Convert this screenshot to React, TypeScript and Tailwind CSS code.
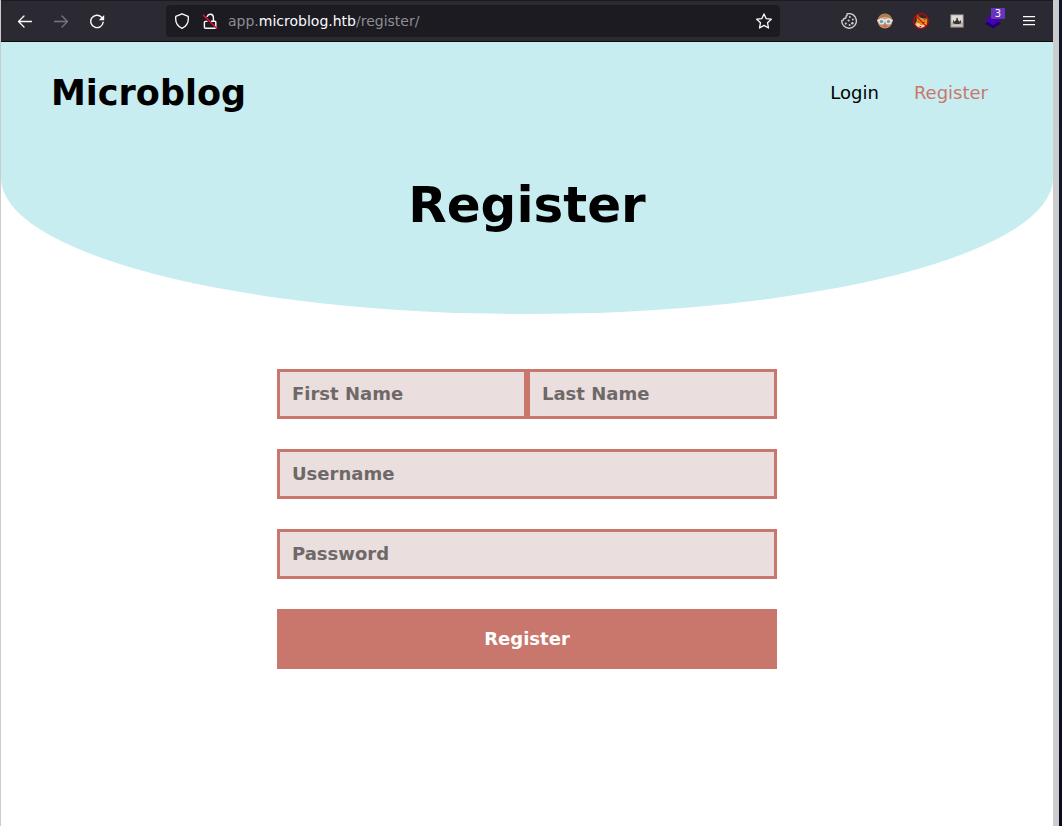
import React from "react";

function Slot({ children }: { children?: React.ReactNode }) {
  return <div className="flex h-8 w-9 items-center justify-center">{children}</div>;
}

function BackIcon({ className }: { className: string }) {
  return (
    <svg className={className} width="16" height="16" viewBox="0 0 16 16" fill="none" stroke="currentColor" strokeWidth="1.3" strokeLinecap="round" strokeLinejoin="round">
      <path d="M14.5 8.5H1.6M7 3 1.5 8.5 7 14" />
    </svg>
  );
}

function ReloadIcon() {
  return (
    <svg width="16" height="16" viewBox="0 0 16 16" fill="none">
      <path d="M12.5 4.2A6.2 6.2 0 1 0 14.1 9.3" stroke="#fbfbfe" strokeWidth="1.4" strokeLinecap="round" />
      <path d="M15.2 2v5.2H9.8z" fill="#fbfbfe" />
    </svg>
  );
}

function ShieldIcon() {
  return (
    <svg width="16" height="16" viewBox="0 0 16 16" fill="none" stroke="#fbfbfe" strokeWidth="1.35" strokeLinejoin="round">
      <path d="M8 .8 14.2 3.3C14.9 8.6 12.4 13.3 8 15.4 3.6 13.3 1.1 8.6 1.8 3.3z" />
    </svg>
  );
}

function InsecureIcon() {
  return (
    <svg width="16" height="16" viewBox="0 0 16 16" fill="none" strokeLinecap="round">
      <path d="M5.2 3.4A3.2 3.2 0 0 1 11.4 4.2V7.8M4.9 8.4H3.3q-.9 0-.9.9v5q0 .9.9.9h9.6q.9 0 .9-.9V9.3q0-1.1-1-1.1H9.5" stroke="#fbfbfe" strokeWidth="1.4" />
      <path d="M1.4 2.2 14.8 15.2" stroke="#f00d3f" strokeWidth="1.4" />
    </svg>
  );
}

function StarIcon() {
  return (
    <svg width="16" height="16" viewBox="0 0 16 16" fill="none" stroke="#fbfbfe" strokeWidth="1.3" strokeLinejoin="round">
      <path d="m8 .9 2.1 4.7 5.2.6-3.8 3.5 1 5.3L8 12.4 3.5 15l1-5.3L.7 6.2l5.2-.6z" />
    </svg>
  );
}

function CookieIcon() {
  return (
    <svg width="16" height="16" viewBox="0 0 16 16" fill="none">
      <path d="M6 .9A7.3 7.3 0 1 1 .8 7.5C2 7.6 2.9 6.8 2.8 5.5 4.5 5.7 5.5 4.6 5 3.1 6 3 6.3 2 6 .9z" stroke="#cfced4" strokeWidth="1.4" strokeLinejoin="round" />
      <g fill="#cfced4">
        <circle cx="8.8" cy="4.1" r="1" />
        <circle cx="11.8" cy="6.4" r="1" />
        <circle cx="7.6" cy="7.5" r="1.1" />
        <circle cx="4.8" cy="10.6" r="1.1" />
        <circle cx="8.6" cy="12" r="1" />
        <circle cx="11.4" cy="10.2" r="1.2" />
      </g>
    </svg>
  );
}

function FaceIcon() {
  return (
    <svg width="16" height="16" viewBox="0 0 16 16">
      <circle cx="8" cy="8" r="7.5" fill="#cb8c61" />
      <path d="M.8 7A7.3 7.3 0 0 1 15.2 7L13 5 8 3.8 3 5z" fill="#a77d52" />
      <path d="M3 5.1 8 3.8l5 1.3V7H3z" fill="#d9a279" />
      <path d="M.3 6.5h15.4v2H.3z" fill="#e5e9ea" />
      <circle cx="4.5" cy="8.5" r="2.4" fill="#6aa3b3" stroke="#e6edf0" strokeWidth="1.2" />
      <circle cx="11.5" cy="8.5" r="2.4" fill="#6aa3b3" stroke="#e6edf0" strokeWidth="1.2" />
      <path d="M6.4 13h3.2" stroke="#a35843" strokeWidth="1" />
    </svg>
  );
}

function FoxIcon() {
  return (
    <svg width="16" height="16" viewBox="0 0 16 16">
      <path d="M3.5 2.6 4.8.9l2 3.4 3.4 1.1 4.6-.7-.9 7.2-3.3 3H4.8L2 11.2l1.8-3.6z" fill="#e58b1c" />
      <path d="m2.3 11.1 3.3-1.3 1.6 2.3 3.2-.2 2.2-2-.6 3.2-2.7 2H5.1z" fill="#f1d5ae" />
      <path d="m4.6 1.5 1.6 3.2M11 6.6l2.8-1.4M5 8.7l1.2.4M9.8 9.7l1.7-.6M6.5 13.5h1.7" stroke="#6a3b20" strokeWidth="1" />
      <circle cx="8" cy="8" r="7.3" fill="none" stroke="#c9050b" strokeWidth="1.2" />
      <path d="m2.8 2.8 10.4 10.4" stroke="#c9050b" strokeWidth="1.2" />
    </svg>
  );
}

function PortraitIcon() {
  return (
    <svg width="14" height="14" viewBox="0 0 14 14">
      <path d="M.5.5h13v13H.5z" fill="#b9aea7" />
      <path d="M1.5 1.5h11v7h-11z" fill="#dedbd7" />
      <path d="M2.8 9 3.5 5.8l1 2L6.2 6 6.6 3.8h1L8 6l1.6 1.8 1-2L11.3 9 9 9.9H5z" fill="#353333" />
      <path d="M2 11.3h10" stroke="#d8cdc5" strokeWidth="1.2" />
    </svg>
  );
}

function LayersIcon() {
  return (
    <svg width="16" height="16" viewBox="0 0 16 16">
      <path d="M0 10.5 8 6l8 4.5-8 5.1z" fill="#1d0074" />
      <path d="M0 6.8 8 1.2l8 5.6-8 5.5z" fill="#4b00af" />
    </svg>
  );
}

function BrowserBar() {
  return (
    <div className="flex h-[42px] items-center justify-between border-t border-b border-t-[#1c1b22] border-b-[#0c0c0d] bg-[#2b2a33] px-[6px]">
      <div className="flex">
        <Slot><BackIcon className="text-[#fbfbfe]" /></Slot>
        <Slot><BackIcon className="-scale-x-100 text-[#77767d]" /></Slot>
        <Slot><ReloadIcon /></Slot>
      </div>
      <div className="ml-[51px] flex h-8 w-[614px] items-center rounded bg-[#1c1b22] px-2">
        <ShieldIcon />
        <span className="ml-3"><InsecureIcon /></span>
        <span className="ml-[10px] flex-1 text-[14px] leading-4 text-[#8e8d94]">
          app.<span className="text-[#fbfbfe]">microblog.htb</span>/register/
        </span>
        <StarIcon />
      </div>
      <div className="ml-[51px] flex">
        <Slot><CookieIcon /></Slot>
        <Slot><FaceIcon /></Slot>
        <Slot><FoxIcon /></Slot>
        <Slot><PortraitIcon /></Slot>
        <Slot>
          <span className="relative">
            <LayersIcon />
            <span className="absolute -top-[5px] left-[6px] flex h-[11px] w-[14px] items-center justify-center rounded-[1px] bg-[#6734c0] text-[10px] leading-none text-white">3</span>
          </span>
        </Slot>
        <Slot>
          <svg width="12" height="10" viewBox="0 0 12 10" fill="#fbfbfe">
            <path d="M0 0h12v1.3H0zM0 4h12v1.3H0zM0 8h12v1.3H0z" />
          </svg>
        </Slot>
      </div>
    </div>
  );
}

const field =
  "block h-[50px] border-[3px] border-[#c9776d] bg-[#eadfde] px-3 pb-[2px] text-[18px] font-bold text-black outline-none placeholder:text-[#6e6968] placeholder:opacity-100";

export default function App() {
  return (
    <div className="flex h-[826px] w-[1062px] overflow-hidden font-['DejaVu_Sans',sans-serif]">
      <div className="w-px bg-[#cccccc]" />
      <div className="w-[1052px] bg-white">
        <BrowserBar />
        <header className="h-[272px] rounded-b-[50%] bg-[#c7edf0]">
          <nav className="flex h-[102px] items-center justify-between pr-[65px] pl-[50px]">
            <a className="text-[35px] font-bold">Microblog</a>
            <div className="flex gap-[35px] pb-[2px] text-[18px]">
              <a>Login</a>
              <a className="text-[#c9776d]">Register</a>
            </div>
          </nav>
          <h1 className="flex h-[122px] items-center justify-center text-[50px] leading-none font-bold">Register</h1>
        </header>
        <form className="mx-auto mt-[55px] flex w-[500px] flex-col gap-[30px]">
          <div className="flex">
            <input className={field + " w-[250px]"} placeholder="First Name" />
            <input className={field + " w-[250px]"} placeholder="Last Name" />
          </div>
          <input className={field} placeholder="Username" />
          <input className={field} type="password" placeholder="Password" />
          <button type="button" className="h-[60px] bg-[#c9776d] pb-[2px] text-[18px] font-bold text-white">Register</button>
        </form>
      </div>
      <div className="w-[6px] bg-[#cccccc]" />
      <div className="flex-1 bg-linear-to-b from-[#0d142b] via-[#101a35] to-[#090a1c]" />
    </div>
  );
}
